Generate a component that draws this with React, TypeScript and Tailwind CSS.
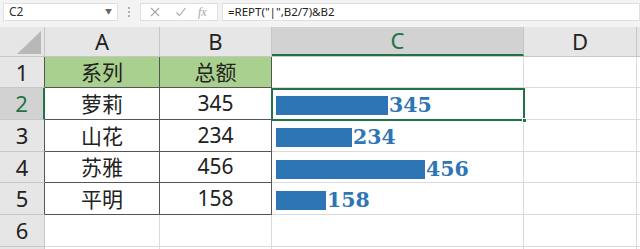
import React from "react";

const rows = [
  { n: 1, a: "系列", b: "总额", header: true },
  { n: 2, a: "萝莉", b: "345" },
  { n: 3, a: "山花", b: "234" },
  { n: 4, a: "苏雅", b: "456" },
  { n: 5, a: "平明", b: "158" },
];
const heights = [31, 32, 32, 31, 32, 32, 4];

const sans = { fontFamily: '"Noto Sans", "Noto Sans CJK SC", sans-serif' };
const cjk = { fontFamily: '"Noto Sans CJK SC", "Noto Sans", sans-serif' };
const serif = { fontFamily: '"DejaVu Serif", "Liberation Serif", serif' };

function Bar({ v }: { v: number }) {
  const count = Math.floor(v / 7);
  return (
    <div className="flex items-center h-full pl-[4px] pt-[4px]">
      <div className="h-[19px] bg-[#2e75b6]" style={{ width: Math.round(count * 2.29) }} />
      <span className="text-[20.5px] font-bold text-[#2e75b6] leading-none ml-[1px]" style={serif}>
        {v}
      </span>
    </div>
  );
}

export default function App() {
  return (
    <div className="w-[640px] h-[249px] overflow-hidden bg-white relative" style={sans}>
      {/* formula bar */}
      <div className="h-[27px] bg-[#f3f3f3] flex items-start pt-[3px]">
        <div className="ml-[3px] w-[115px] h-[18px] bg-white border border-[#e0e0e0] flex items-center px-[5px] justify-between">
          <span className="text-[12px] text-[#333]">C2</span>
          <span className="text-[7px] text-[#666]">▼</span>
        </div>
        <div className="w-[22px] h-[18px] flex flex-col items-center justify-center gap-[2px]">
          <div className="w-[2px] h-[2px] bg-[#b0b0b0]" />
          <div className="w-[2px] h-[2px] bg-[#b0b0b0]" />
          <div className="w-[2px] h-[2px] bg-[#b0b0b0]" />
        </div>
        <div className="w-[78px] h-[18px] bg-white border border-[#e0e0e0] flex items-center text-[#a6a6a6]">
          <svg width="12" height="12" viewBox="0 0 12 12" className="ml-[8px]">
            <path d="M2 2 L10 10 M10 2 L2 10" stroke="#a6a6a6" strokeWidth="1.1" />
          </svg>
          <svg width="12" height="12" viewBox="0 0 12 12" className="ml-[14px]">
            <path d="M1.5 6.5 L4.5 9.5 L10.5 2" stroke="#a6a6a6" strokeWidth="1.1" fill="none" />
          </svg>
          <span className="ml-[11px] text-[12px] italic" style={{ fontFamily: '"Liberation Serif", serif' }}>
            fx
          </span>
        </div>
        <div className="ml-[4px] flex-1 h-[18px] bg-white border border-[#e0e0e0] flex items-center px-[5px]">
          <span className="text-[11.5px] text-[#222]">=REPT("|",B2/7)&B2</span>
        </div>
      </div>

      {/* column headers */}
      <div className="flex h-[30px] bg-[#e6e6e6] border-b border-[#c6c6c6]">
        <div className="w-[45px] h-full border-r border-[#c6c6c6] relative">
          <svg width="24" height="23" viewBox="0 0 24 23" className="absolute right-[3px] bottom-[2px]">
            <polygon points="24,0 24,23 0,23" fill="#b8b8b8" />
          </svg>
        </div>
        <div className="w-[115px] border-r border-[#c6c6c6] flex items-center justify-center text-[22px] text-[#222]">A</div>
        <div className="w-[112px] border-r border-[#c6c6c6] flex items-center justify-center text-[22px] text-[#222]">B</div>
        <div className="w-[252px] bg-[#d2d2d2] border-r border-[#c6c6c6] border-b-2 border-b-[#217346] flex items-center justify-center text-[22px] text-[#217346]">C</div>
        <div className="w-[113px] border-r border-[#c6c6c6] flex items-center justify-center text-[22px] text-[#222]">D</div>
        <div className="flex-1" />
      </div>

      {/* rows */}
      {heights.map((h, i) => {
        const r = rows[i];
        const sel = r && r.n === 2;
        const n = i + 1;
        return (
          <div key={i} className="flex" style={{ height: h }}>
            <div
              className={`w-[45px] h-full flex items-center justify-center text-[22px] border-b border-[#c6c6c6] ${
                sel ? "bg-[#d2d2d2] text-[#217346] border-r-2 border-r-[#217346]" : "bg-[#e6e6e6] text-[#222] border-r border-r-[#555]"
              } ${!r ? "border-r-[#c6c6c6]" : ""}`}
            >
              {n <= 6 ? n : ""}
            </div>
            {r ? (
              <>
                <div
                  className={`w-[115px] h-full flex items-center justify-center text-[21px] text-[#222] border-r border-b border-[#555] ${
                    r.header ? "bg-[#a9d08e]" : ""
                  }`}
                  style={cjk}
                >
                  {r.a}
                </div>
                <div
                  className={`w-[112px] h-full flex items-center justify-center text-[21px] text-[#222] border-r border-b border-[#555] ${
                    r.header ? "bg-[#a9d08e]" : ""
                  }`}
                  style={r.header ? cjk : sans}
                >
                  {r.b}
                </div>
                <div className="w-[252px] h-full border-r border-b border-[#dadada]">
                  {!r.header && <Bar v={Number(r.b)} />}
                </div>
              </>
            ) : (
              <>
                <div className="w-[115px] h-full border-r border-b border-[#dadada]" />
                <div className="w-[112px] h-full border-r border-b border-[#dadada]" />
                <div className="w-[252px] h-full border-r border-b border-[#dadada]" />
              </>
            )}
            <div className="w-[113px] h-full border-r border-b border-[#dadada]" />
            <div className="flex-1 h-full border-b border-[#dadada]" />
          </div>
        );
      })}

      {/* selection box around C2 */}
      <div className="absolute left-[271px] top-[88px] w-[254px] h-[33px] border-2 border-[#217346] pointer-events-none">
        <div className="absolute right-[-4px] bottom-[-4px] w-[5px] h-[5px] bg-[#217346] border border-white" />
      </div>
    </div>
  );
}
